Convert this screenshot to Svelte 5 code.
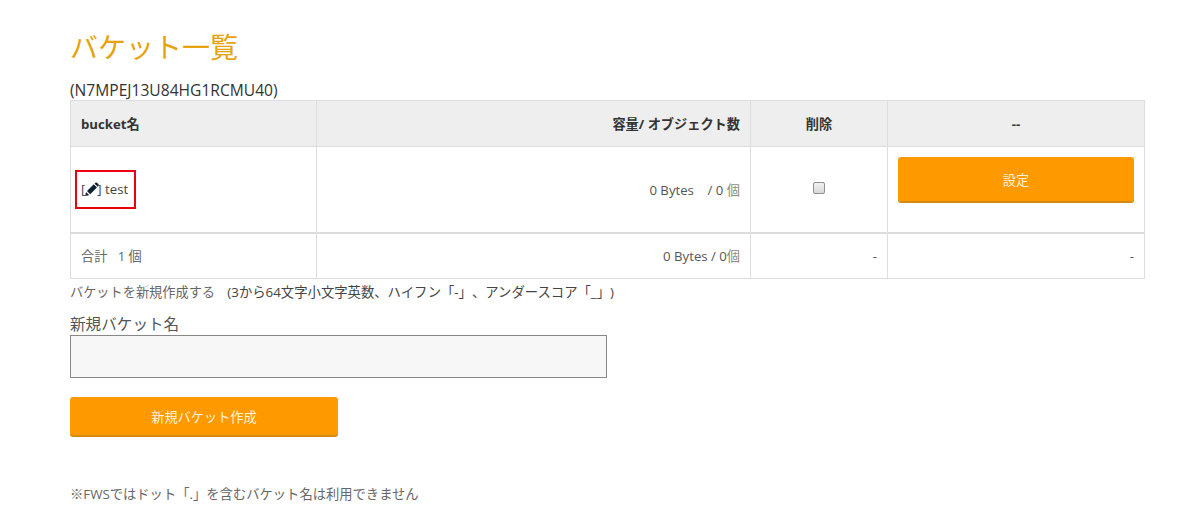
<script>
  const buckets = [{ name: 'test', size: '0 Bytes', count: 0 }];
</script>

<main class="page">
  <h1>バケット一覧</h1>
  <p class="account">(N7MPEJ13U84HG1RCMU40)</p>
  <table>
    <colgroup>
      <col class="c1" /><col class="c2" /><col class="c3" /><col class="c4" />
    </colgroup>
    <thead>
      <tr>
        <th class="left">bucket名</th>
        <th class="right">容量/ オブジェクト数</th>
        <th>削除</th>
        <th>--</th>
      </tr>
    </thead>
    <tbody>
      {#each buckets as b}
        <tr class="data">
          <td class="name">
            <span class="link">[<svg class="pencil" viewBox="0 0 16 16" aria-hidden="true"><path d="M1.2 15 L2.2 10.6 L5.6 14 Z M3.2 9.6 L10.4 2.4 L13.8 5.8 L6.6 13 Z M11.2 1.6 L12.2 .7 Q13 .1 13.8 .7 L15.5 2.4 Q16 3.2 15.4 4 L14.6 5 Z" /></svg>] {b.name}</span>
            <span class="marker"></span>
          </td>
          <td class="right">{b.size} &nbsp;&nbsp; / {b.count} <span class="unit">個</span></td>
          <td class="center"><input type="checkbox" /></td>
          <td class="action"><button class="btn wide">設定</button></td>
        </tr>
      {/each}
      <tr class="total">
        <td class="muted">合計 &nbsp; 1 個</td>
        <td class="right">0 Bytes / 0<span class="unit">個</span></td>
        <td class="right">-</td>
        <td class="right">-</td>
      </tr>
    </tbody>
  </table>
  <p class="hint">バケットを新規作成する &nbsp; <span class="dark">(3から64文字小文字英数、ハイフン「-」、アンダースコア「_」)</span></p>
  <label class="field">
    <span>新規バケット名</span>
    <input type="text" />
  </label>
  <button class="btn create">新規バケット作成</button>
  <p class="note">※FWSではドット「.」を含むバケット名は利用できません</p>
</main>

<style>
  :global(body) {
    margin: 0;
    background: #fff;
  }
  .page {
    box-sizing: border-box;
    width: 1200px;
    height: 512px;
    overflow: hidden;
    padding: 29px 55px 0 70px;
    font-family: "Open Sans", "Noto Sans CJK JP", sans-serif;
    font-size: 13.2px;
    text-spacing-trim: space-all;
    color: #555;
  }
  h1 {
    margin: 0;
    font-size: 28px;
    line-height: 36px;
    font-weight: 400;
    color: #e8a20c;
  }
  .account {
    margin: 16px 0 0;
    font-size: 15.6px;
    line-height: 19px;
    color: #333;
  }
  table {
    width: 1074px;
    table-layout: fixed;
    border-collapse: collapse;
  }
  .c1 { width: 246px; }
  .c2 { width: 434px; }
  .c3 { width: 137px; }
  .c4 { width: 257px; }
  th, td {
    box-sizing: border-box;
    border: 1px solid #ddd;
    padding: 0 10px;
    text-align: left;
    font-weight: 400;
  }
  th {
    height: 46px;
    background: #eee;
    color: #333;
    font-weight: 700;
    text-align: center;
  }
  th.left { text-align: left; }
  .right, th.right { text-align: right; }
  .center { text-align: center; }
  .data td { height: 86px; border-bottom-width: 2px; }
  .total td { height: 46px; }
  .unit { color: #8a8a7a; }
  .name { position: relative; color: #444; }
  .link { white-space: nowrap; }
  .pencil {
    width: 15px;
    height: 15px;
    margin: 0 -2px 0 -1px;
    vertical-align: -3px;
    fill: #0f2233;
  }
  .marker {
    position: absolute;
    left: 4px;
    top: 23px;
    width: 57px;
    height: 35px;
    border: 2px solid #ea0010;
  }
  .muted { color: #666; }
  input[type="checkbox"] {
    appearance: none;
    box-sizing: border-box;
    width: 12px;
    height: 12px;
    margin: 0 0 4px;
    vertical-align: middle;
    border: 1px solid #8f8f8f;
    border-radius: 2px;
    background: linear-gradient(#f2f2f2, #d8d8d8);
  }
  .action { vertical-align: top; padding-top: 10px; }
  .btn {
    display: block;
    box-sizing: border-box;
    border: 0;
    border-bottom: 2px solid #d58a10;
    border-radius: 3px;
    background: #ff9900;
    color: #fff4dc;
    font: inherit;
    padding: 0;
  }
  .wide { width: 100%; height: 46px; }
  .hint {
    margin: 4px 0 0;
    line-height: 19px;
    color: #666;
  }
  .dark { margin-left: 2px; font-size: 13.35px; color: #444; }
  .field { display: block; margin-top: 12px; }
  .field span {
    display: block;
    font-size: 15.6px;
    line-height: 20px;
    color: #555;
  }
  .field input {
    display: block;
    box-sizing: border-box;
    width: 537px;
    height: 43px;
    margin: 1px 0 0;
    border: 1px solid #888;
    background: #f7f7f7;
  }
  .create { width: 268px; height: 40px; margin-top: 19px; }
  .note {
    margin: 48px 0 0;
    font-size: 13.3px;
    line-height: 19px;
    color: #666;
  }
</style>
